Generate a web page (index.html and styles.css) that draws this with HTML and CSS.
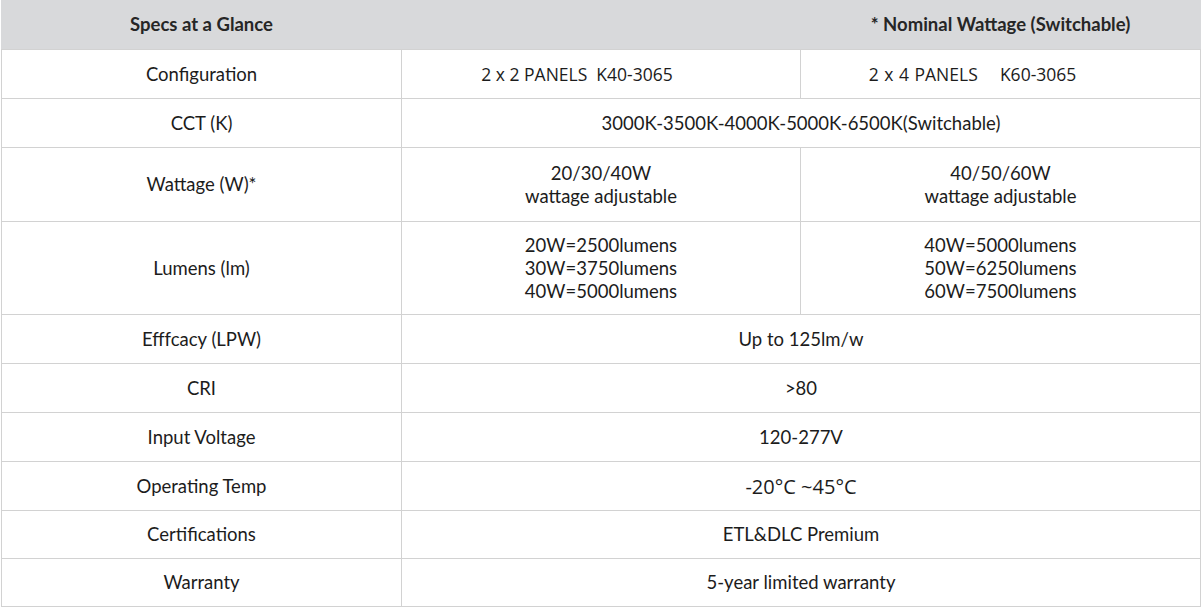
FILE: index.html
```html
<!DOCTYPE html>
<html>
<head>
<meta charset="utf-8">
<link rel="stylesheet" href="styles.css">
</head>
<body>
<div class="wrap">
<table class="specs">
  <colgroup>
    <col class="c1"><col class="c2"><col class="c3">
  </colgroup>
  <tr class="head h49">
    <th>Specs at a Glance</th>
    <th></th>
    <th>* Nominal Wattage (Switchable)</th>
  </tr>
  <tr class="h49">
    <td>Configuration</td>
    <td class="seg cfg-a">2 x 2 PANELS&nbsp; K40-3065</td>
    <td class="seg cfg-b">2 x 4 PANELS &nbsp;&nbsp; K60-3065</td>
  </tr>
  <tr class="h49">
    <td>CCT (K)</td>
    <td colspan="2">3000K-3500K-4000K-5000K-6500K(Switchable)</td>
  </tr>
  <tr class="h74">
    <td>Wattage (W)*</td>
    <td>20/30/40W<br>wattage adjustable</td>
    <td>40/50/60W<br>wattage adjustable</td>
  </tr>
  <tr class="h93">
    <td>Lumens (lm)</td>
    <td>20W=2500lumens<br>30W=3750lumens<br>40W=5000lumens</td>
    <td>40W=5000lumens<br>50W=6250lumens<br>60W=7500lumens</td>
  </tr>
  <tr class="h49">
    <td>Efffcacy (LPW)</td>
    <td colspan="2">Up to 125lm/w</td>
  </tr>
  <tr class="h49">
    <td>CRI</td>
    <td colspan="2">&gt;80</td>
  </tr>
  <tr class="h49">
    <td>Input Voltage</td>
    <td colspan="2">120-277V</td>
  </tr>
  <tr class="h49">
    <td>Operating Temp</td>
    <td colspan="2" class="seg big">-20°C ~45°C</td>
  </tr>
  <tr class="h48">
    <td>Certifications</td>
    <td colspan="2">ETL&amp;DLC Premium</td>
  </tr>
  <tr class="h48">
    <td>Warranty</td>
    <td colspan="2">5-year limited warranty</td>
  </tr>
</table>
</div>
</body>
</html>
```
FILE: styles.css
```css
html, body {
  margin: 0;
  padding: 0;
  background: #ffffff;
}
.wrap {
  padding: 0 0 0 1px;
}
.specs {
  border-collapse: collapse;
  table-layout: fixed;
  width: 1199px;
  font-family: Lato, "Noto Sans", sans-serif;
  font-size: 18.5px;
  color: #1c1c1c;
}
.c1 { width: 400px; }
.c2 { width: 399px; }
.c3 { width: 400px; }
.specs th,
.specs td {
  border: 1px solid #d2d2d2;
  text-align: center;
  vertical-align: middle;
  padding: 1px 0 0 0;
  line-height: 23px;
}
.specs .head th {
  background: #d8d9db;
  border-color: #d8d9db;
  border-top: none;
  border-bottom: 1px solid #d2d2d2;
  font-weight: bold;
  color: #262626;
}
.h49 { height: 49px; }
.h48 { height: 48px; }
.h74 { height: 74px; }
.h93 { height: 93px; }
.seg {
  font-family: "Open Sans", "Noto Sans", sans-serif;
  font-size: 17.5px;
}
.specs .cfg-a {
  padding-right: 48px;
}
.specs .cfg-b {
  padding-right: 56px;
  word-spacing: 1px;
}
.seg.big {
  font-size: 20px;
}
```
